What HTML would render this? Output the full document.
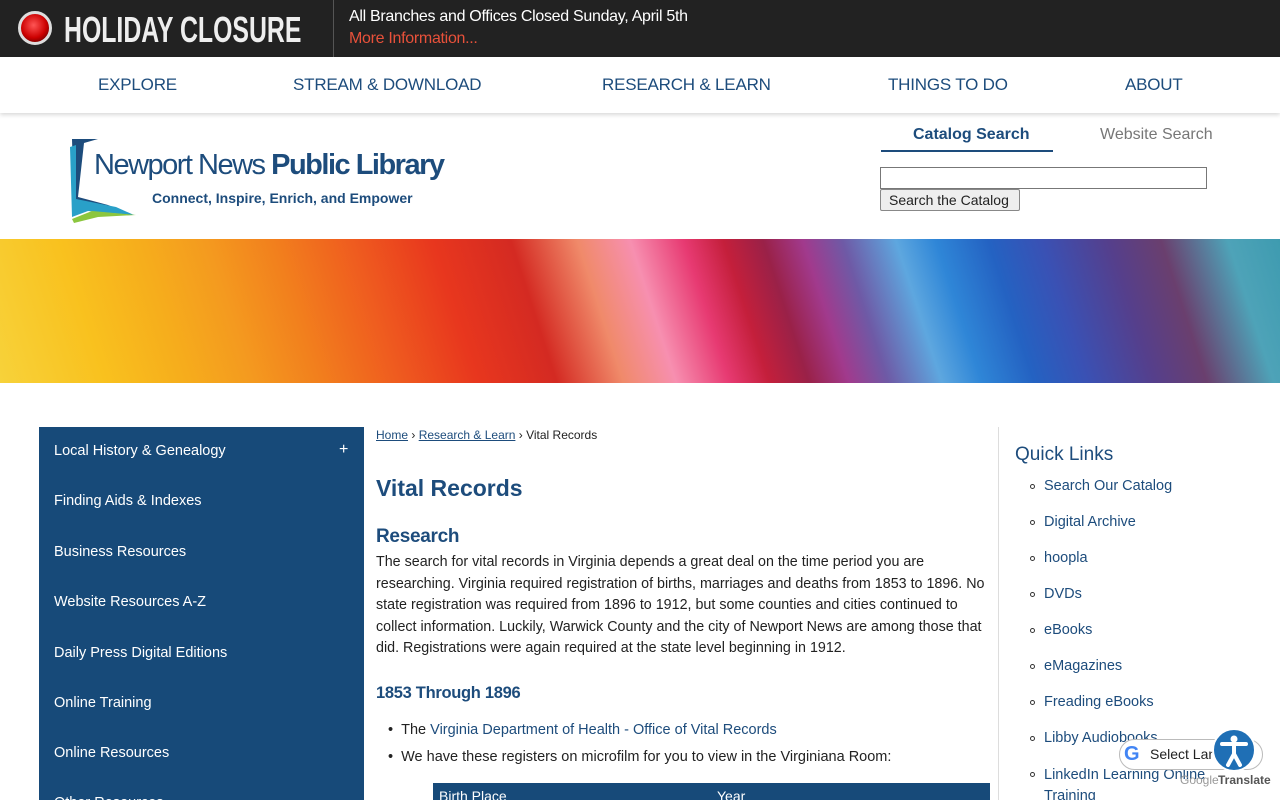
<!DOCTYPE html>
<html style="width:1280px;height:800px;overflow:hidden"><head><meta charset="utf-8"><style>
*{box-sizing:border-box;margin:0;padding:0}
body{width:1280px;height:800px;overflow:hidden;font-family:"Liberation Sans",Arial,sans-serif;background:#fff;position:relative}
.top{position:absolute;left:0;top:0;width:1280px;height:57px;background:#222}
.dot{position:absolute;left:18px;top:11px;width:34px;height:34px;border-radius:50%;background:radial-gradient(circle at 45% 40%,#f55 0,#c00 55%,#800 75%);border:3px solid #ddd}
.hc{position:absolute;left:64px;top:9px;color:#eee;font:bold 36px "Liberation Sans",sans-serif;transform:scaleX(.69);transform-origin:left;white-space:nowrap}
.sep{position:absolute;left:333px;top:0;width:1px;height:57px;background:#555}
.t1{position:absolute;left:349px;top:8px;color:#fff;font-size:16px;letter-spacing:-.3px}
.t2{position:absolute;left:349px;top:30px;color:#e8513a;font-size:16px;letter-spacing:-.3px}
.nav{position:absolute;top:57px;left:0;width:1280px;height:56px;background:#fff;box-shadow:0 2px 4px rgba(0,0,0,.15)}
.nav span{position:absolute;top:18px;color:#1d4c7c;font-size:17px;letter-spacing:-.2px}
.logo{position:absolute;left:68px;top:137px}
.tab{position:absolute;top:126px;font-size:16px}
.banner{position:absolute;top:239px;left:0;width:1280px;height:144px;background:linear-gradient(72deg,#f7d23a 0,#f9c11e 8%,#f6ad1c 14%,#f49a1f 19%,#f2801d 24%,#ef5c1f 30%,#e8371e 36%,#d42a22 42%,#f08a6a 47%,#f78fb0 51%,#e73a72 55%,#c41f3b 58%,#9a2148 61%,#a13a8d 64%,#6e5aa6 67%,#5ea7df 71%,#2f86d7 74%,#2462c2 78%,#3a51b4 82%,#553f8c 87%,#6a3f6e 91%,#4ea3b8 96%,#3e9bb0 100%)}
.side{position:absolute;left:39px;top:427px;width:325px;height:373px;background:#174a79;overflow:hidden}
.side div{position:absolute;left:15px;color:#fff;font-size:14.5px}
.main{position:absolute;left:376px;top:427px;width:615px;height:373px;color:#222}
a{color:#1d4c7c}
.vl{position:absolute;left:998px;top:427px;width:1px;height:373px;background:#ddd}
.ql{position:absolute;left:1015px;top:444px;color:#1d4c7c;font-size:19px}
.qli{position:absolute;left:1044px;color:#1d4c7c;font-size:14.5px}
.qlb{position:absolute;left:1030px;width:5px;height:5px;border:1px solid #333;border-radius:50%}
</style></head><body>
<div class="top"><div class="dot"></div><div class="hc">HOLIDAY CLOSURE</div><div class="sep"></div>
<div class="t1">All Branches and Offices Closed Sunday, April 5th</div><div class="t2">More Information...</div></div>
<div class="nav"><span style="left:98px">EXPLORE</span><span style="left:293px">STREAM &amp; DOWNLOAD</span><span style="left:602px">RESEARCH &amp; LEARN</span><span style="left:888px">THINGS TO DO</span><span style="left:1125px">ABOUT</span></div>
<div class="logo">
<svg width="80" height="90" style="position:absolute;left:0;top:0"><path d="M4 2 L30 2 L16 6 L10 60 L40 68 L64 78 L20 70 L6 72 Z" fill="#1d4c7c"/><path d="M2 10 L8 8 L8 62 L48 70 L66 78 L20 74 L4 80 Z" fill="#29a0c8"/><path d="M4 82 L24 74 L68 78 L30 80 L6 86 Z" fill="#8cc63f"/></svg>
<div style="position:absolute;left:26px;top:12px;font-size:29px;color:#1d4c7c;letter-spacing:-1.5px;white-space:nowrap">Newport News <b>Public Library</b></div>
<div style="position:absolute;left:84px;top:53px;font-size:14px;font-weight:bold;color:#1d4c7c;white-space:nowrap">Connect, Inspire, Enrich, and Empower</div>
</div>
<div class="tab" style="left:913px;color:#1d4c7c;font-weight:bold">Catalog Search</div>
<div style="position:absolute;left:881px;top:150px;width:172px;height:2px;background:#1d4c7c"></div>
<div class="tab" style="left:1100px;color:#777">Website Search</div>
<div style="position:absolute;left:880px;top:167px;width:327px;height:22px;border:1px solid #777"></div>
<div style="position:absolute;left:880px;top:189px;width:140px;height:22px;border:1px solid #888;background:#eee;border-radius:2px;font-size:14px;padding:2px 8px;color:#222">Search the Catalog</div>
<div class="banner"></div>
<div class="side">
<div style="top:16px">Local History &amp; Genealogy</div><div style="left:300px;top:14px;font-size:16px">+</div>
<div style="top:66px">Finding Aids &amp; Indexes</div>
<div style="top:117px">Business Resources</div>
<div style="top:167px">Website Resources A-Z</div>
<div style="top:218px">Daily Press Digital Editions</div>
<div style="top:268px">Online Training</div>
<div style="top:318px">Online Resources</div>
<div style="top:368px">Other Resources</div>
</div>
<div class="main">
<div style="font-size:12px;margin-top:1px"><a href="#">Home</a> › <a href="#">Research &amp; Learn</a> › Vital Records</div>
<div style="position:absolute;top:48px;font-size:23px;font-weight:bold;color:#1d4c7c">Vital Records</div>
<div style="position:absolute;top:99px;font-size:19px;color:#1d4c7c;font-weight:bold;letter-spacing:-.3px">Research</div>
<div style="position:absolute;top:125px;font-size:14.3px;line-height:21.6px;width:618px">The search for vital records in Virginia depends a great deal on the time period you are researching. Virginia required registration of births, marriages and deaths from 1853 to 1896. No state registration was required from 1896 to 1912, but some counties and cities continued to collect information. Luckily, Warwick County and the city of Newport News are among those that did. Registrations were again required at the state level beginning in 1912.</div>
<div style="position:absolute;top:257px;font-size:16.5px;color:#1d4c7c;font-weight:bold;letter-spacing:-.3px">1853 Through 1896</div>
<div style="position:absolute;top:295px;left:12px;font-size:14.5px;white-space:nowrap">• &nbsp;The <span style="color:#1d4c7c">Virginia Department of Health - Office of Vital Records</span></div>
<div style="position:absolute;top:322px;left:12px;font-size:14.5px;white-space:nowrap">• &nbsp;We have these registers on microfilm for you to view in the Virginiana Room:</div>
<div style="position:absolute;top:356px;left:57px;width:557px;height:17px;background:#174a79;color:#fff;font-size:14px;padding:6px 6px;overflow:hidden;line-height:14px">Birth Place<span style="position:absolute;left:284px">Year</span></div>
</div>
<div class="vl"></div>
<div class="ql">Quick Links</div>
<div class="qlb" style="top:484px"></div><div class="qli" style="top:478px">Search Our Catalog</div>
<div class="qlb" style="top:520px"></div><div class="qli" style="top:514px">Digital Archive</div>
<div class="qlb" style="top:556px"></div><div class="qli" style="top:550px">hoopla</div>
<div class="qlb" style="top:592px"></div><div class="qli" style="top:586px">DVDs</div>
<div class="qlb" style="top:628px"></div><div class="qli" style="top:622px">eBooks</div>
<div class="qlb" style="top:664px"></div><div class="qli" style="top:658px">eMagazines</div>
<div class="qlb" style="top:700px"></div><div class="qli" style="top:694px">Freading eBooks</div>
<div class="qlb" style="top:736px"></div><div class="qli" style="top:730px">Libby Audiobooks</div>
<div class="qlb" style="top:772px"></div><div class="qli" style="top:765px;line-height:21px">LinkedIn Learning Online<br>Training</div>
<div style="position:absolute;left:1119px;top:739px;width:144px;height:31px;border:1px solid #bbb;border-radius:16px;background:#fff"></div>
<div style="position:absolute;left:1124px;top:743px;font:bold 20px 'Liberation Sans';color:#4285f4">G</div>
<div style="position:absolute;left:1150px;top:746px;font-size:14px;color:#222">Select Lan</div>
<div style="position:absolute;left:1212px;top:728px;width:44px;height:44px;border-radius:50%;background:#1f6fb5;border:2px solid #fff">
<svg width="40" height="40" viewBox="0 0 40 40"><circle cx="20" cy="9" r="3.5" fill="#fff"/><path d="M8 14 L32 14 M20 14 L20 24 M20 24 L14 35 M20 24 L26 35" stroke="#fff" stroke-width="4" fill="none" stroke-linecap="round"/></svg></div>
<div style="position:absolute;left:1180px;top:773px;font-size:12px;color:#999">Google</div>
<div style="position:absolute;left:1218px;top:773px;font-size:12px;font-weight:bold;color:#555">Translate</div>
</body></html>
